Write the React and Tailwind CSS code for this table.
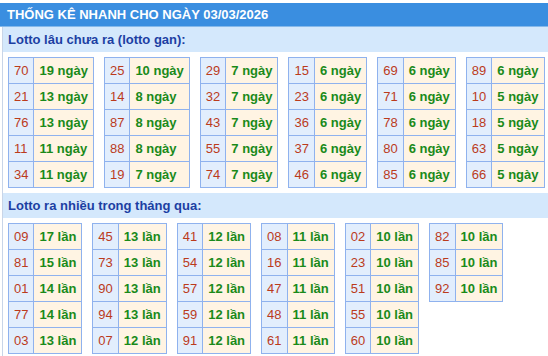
const gan = [
  [['70', 19], ['21', 13], ['76', 13], ['11', 11], ['34', 11]],
  [['25', 10], ['14', 8], ['87', 8], ['88', 8], ['19', 7]],
  [['29', 7], ['32', 7], ['43', 7], ['55', 7], ['74', 7]],
  [['15', 6], ['23', 6], ['36', 6], ['37', 6], ['46', 6]],
  [['69', 6], ['71', 6], ['78', 6], ['80', 6], ['85', 6]],
  [['89', 6], ['10', 5], ['18', 5], ['63', 5], ['66', 5]],
];

const nhieu = [
  [['09', 17], ['81', 15], ['01', 14], ['77', 14], ['03', 13]],
  [['45', 13], ['73', 13], ['90', 13], ['94', 13], ['07', 12]],
  [['41', 12], ['54', 12], ['57', 12], ['59', 12], ['91', 12]],
  [['08', 11], ['16', 11], ['47', 11], ['48', 11], ['61', 11]],
  [['02', 10], ['23', 10], ['51', 10], ['55', 10], ['60', 10]],
  [['82', 10], ['85', 10], ['92', 10]],
];

function LottoTable({ rows, unit }) {
  return (
    <div className="flex-none grid grid-cols-[auto_auto] border-l border-t border-[#8fb2ee] text-[13px] leading-[15px] whitespace-nowrap">
      {rows.map(([num, count], i) => (
        <div key={i} className="contents">
          <div className="h-[26px] flex items-center px-[5px] bg-[#e2eefd] text-[#bb3b1c] border-r border-b border-[#8fb2ee]">
            {num}
          </div>
          <div className="h-[26px] flex items-center px-[5px] bg-[#fff4e3] text-[#1a8a1a] font-bold border-r border-b border-[#8fb2ee]">
            {count} {unit}
          </div>
        </div>
      ))}
    </div>
  );
}

function SectionTitle({ children }) {
  return (
    <div className="h-[25px] flex items-center pl-[5px] bg-[#d4e8fc] text-[#1c3fa3] font-bold text-[13px]">
      {children}
    </div>
  );
}

export default function App() {
  return (
    <div className="w-[548px] h-[356px] bg-white overflow-hidden pt-[3px]" style={{ fontFamily: '"Liberation Sans", Arial, sans-serif' }}>
      {/* Header */}
      <div className="h-[24px] flex items-center pl-[7px] bg-[#3a8ee0] border-b border-[#86b9ea] text-white font-bold text-[13px]">
        THỐNG KÊ NHANH CHO NGÀY 03/03/2026
      </div>

      <div className="ml-[2px] border-l border-[#c8d5e8]">
        <SectionTitle>Lotto lâu chưa ra (lotto gan):</SectionTitle>
        <div className="flex items-start gap-[10px] pl-[5px] py-[5px]">
          {gan.map((t, i) => (
            <LottoTable key={i} rows={t} unit="ngày" />
          ))}
        </div>

        <SectionTitle>Lotto ra nhiều trong tháng qua:</SectionTitle>
        <div className="flex items-start gap-[10px] pl-[5px] py-[5px]">
          {nhieu.map((t, i) => (
            <LottoTable key={i} rows={t} unit="lần" />
          ))}
        </div>
      </div>
    </div>
  );
}
